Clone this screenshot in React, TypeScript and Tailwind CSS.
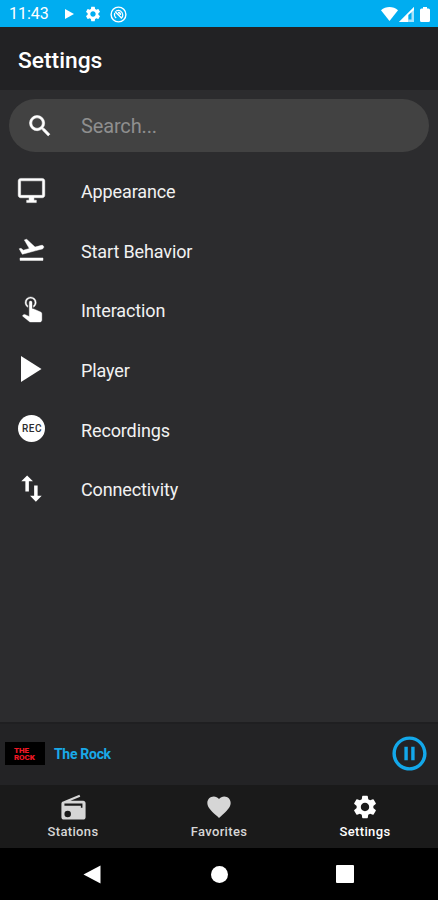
import { MdFavorite, MdPauseCircleOutline, MdSettings } from "react-icons/md"

const items = [
  {
    title: "Appearance",
    icon: (
      <svg width="29" height="29" viewBox="0 0 24 24" fill="currentColor" stroke="currentColor" strokeWidth=".4">
        <path d="M21 2H3c-1.1 0-2 .9-2 2v12c0 1.1.9 2 2 2h7v2H8v2h8v-2h-2v-2h7c1.1 0 2-.9 2-2V4c0-1.1-.9-2-2-2zm0 14H3V4h18v12z" />
      </svg>
    ),
  },
  {
    title: "Start Behavior",
    icon: (
      <svg width="29" height="29" viewBox="0 0 24 24" fill="currentColor" stroke="currentColor" strokeWidth=".4">
        <path d="M2.5 19h19v2h-19zM22.07 9.64c-.21-.8-1.04-1.28-1.84-1.06L14.92 10l-6.9-6.43-1.93.51 4.14 7.17-4.97 1.33-1.97-1.54-1.45.39 1.82 3.16.77 1.33 1.6-.43 5.31-1.42 4.35-1.16L21 11.49c.81-.23 1.28-1.05 1.07-1.85z" />
      </svg>
    ),
  },
  {
    title: "Interaction",
    icon: (
      <svg width="30" height="30" viewBox="0 0 24 24" fill="currentColor">
        <path
          transform="translate(-1.4 -3.3) scale(1.12)"
          stroke="currentColor"
          strokeWidth=".25"
          d="M10 9A1 1 0 0 1 11 8a1 1 0 0 1 1 1v4.47l1.21.13 4.94 2.19c.53.24.85.77.85 1.35v4.36c-.03.82-.68 1.47-1.5 1.5H11c-.38 0-.74-.15-1-.43L5.1 18.62l.74-.77c.19-.21.46-.32.74-.32h.22L10 19V9m1-4a4 4 0 0 1 4 4c0 1.5-.8 2.77-2 3.46v-1.22c.61-.55 1-1.35 1-2.24a3 3 0 0 0-6 0c0 .89.39 1.69 1 2.24v1.22C7.8 11.77 7 10.5 7 9a4 4 0 0 1 4-4z"
        />
      </svg>
    ),
  },
  {
    title: "Player",
    icon: (
      <svg width="21" height="26" viewBox="0 0 21 26" fill="currentColor">
        <path d="M0 0v26l20.5-13z" />
      </svg>
    ),
  },
  {
    title: "Recordings",
    icon: (
      <span className="flex size-[27px] shrink-0 items-center justify-center rounded-full bg-white pl-px text-[10px] font-medium tracking-[0.5px] text-[#2c2c2e]">
        REC
      </span>
    ),
  },
  {
    title: "Connectivity",
    icon: (
      <svg width="35" height="35" viewBox="0 0 24 24" fill="currentColor" className="shrink-0">
        <path d="M9 3L5 6.99h2.8V14h2.4V6.99H13L9 3zm7.2 14.01V10h-2.4v7.01H11L15 21l4-3.99z" />
      </svg>
    ),
  },
]

const tabs = [
  {
    title: "Stations",
    icon: (
      <svg width="29" height="29" viewBox="0 0 24 24" fill="currentColor">
        <path
          fillRule="evenodd"
          d="M20 6.5H9.5l8.1-3.4-.7-1.7L3.4 7C2.5 7.3 2 8 2 8.8V20c0 1.1.9 2 2 2h16c1.1 0 2-.9 2-2V8.500c0-1.100-.9-2-2-2zM7.200 20a2.700 2.700 0 1 1 0-5.400 2.700 2.700 0 0 1 0 5.400zM19.400 12.200h-1.300v-1.700H4.500V8.600h14.900z"
        />
      </svg>
    ),
    active: false,
  },
  { title: "Favorites", icon: <MdFavorite size={28} />, active: false },
  { title: "Settings", icon: <MdSettings size={28} />, active: true },
]

function StatusBar() {
  return (
    <div className="flex h-[27px] shrink-0 items-center bg-[#00adf0] pr-2 pl-[9px] pt-px text-white">
      <span className="w-14 text-[16px] leading-none">11:43</span>
      <svg width="9" height="10" viewBox="0 0 9 10" fill="currentColor">
        <path d="M0 0v10l9-5z" />
      </svg>
      <MdSettings size={18} className="ml-[10px]" />
      <svg className="ml-2" width="17" height="17" viewBox="0 0 17 17" fill="none" stroke="currentColor">
        <circle cx="8.5" cy="8.5" r="7.4" strokeWidth="1.4" />
        <path d="M6 5q4-2 6 1.500t-1 6M4.700 7q-1 3 1.500 5" strokeWidth="1.2" />
        <path d="M5 5.500l6.500 6.500M8 6.500q2.500 0 2.500 2.500" strokeWidth="1.400" />
      </svg>
      <div className="ml-auto flex items-center">
        <svg width="17" height="14" viewBox="0 0 17 14" fill="currentColor">
          <path d="M0 3.2C4.8-1 12.2-1 17 3.2L8.5 14z" />
        </svg>
        <svg className="ml-px" width="16" height="15" viewBox="0 0 16 15" fill="currentColor">
          <path d="M0 15L15 0v15z" opacity=".65" />
          <path d="M0 15L15 0v3L9 8v7z" />
          <path d="M9.500 8l3-2.500v7h-3z" fill="#00adf0" />
        </svg>
        <svg className="ml-[5px]" width="10" height="15" viewBox="0 0 10 15" fill="currentColor">
          <path d="M3 0h4v1.5h1.5Q10 1.5 10 3v10.5Q10 15 8.5 15h-7Q0 15 0 13.5V3q0-1.5 1.5-1.5H3z" />
        </svg>
      </div>
    </div>
  )
}

export default function App() {
  return (
    <div className="flex h-[900px] w-[438px] flex-col overflow-hidden bg-[#2c2c2e] font-['Roboto',sans-serif] text-white">
      <StatusBar />

      <header className="flex h-[63px] shrink-0 items-center bg-[#222224] pl-[18px] pt-[5px]">
        <h1 className="text-[22.8px] leading-[30px] font-medium">Settings</h1>
      </header>

      {/* Search */}
      <div className="mx-[9px] mt-[9px] flex h-[53px] shrink-0 items-center rounded-full bg-[#424242] pl-[17px]">
        <svg width="28" height="28" viewBox="0 0 24 24" fill="currentColor" stroke="currentColor" strokeWidth=".5">
          <path d="M15.5 14h-.79l-.28-.27A6.471 6.471 0 0 0 16 9.5 6.5 6.5 0 1 0 9.5 16c1.61 0 3.09-.59 4.23-1.57l.27.28v.79l5 4.99L20.49 19l-4.99-5zm-6 0C7.01 14 5 11.99 5 9.5S7.01 5 9.5 5 14 7.01 14 9.5 11.99 14 9.5 14z" />
        </svg>
        <span className="ml-[27px] text-[20px] tracking-[-0.15px] text-[#8f8f8f]">Search...</span>
      </div>

      {/* Settings list */}
      <ul className="grow pt-[9.5px]">
        {items.map((item) => (
          <li key={item.title} className="flex h-[59.6px] items-center">
            <div className="flex w-[63px] shrink-0 items-center justify-center pb-[2px]">{item.icon}</div>
            <span className="ml-[18px] pt-px text-[18px] tracking-[-0.13px] text-[#f2f2f2]">{item.title}</span>
          </li>
        ))}
      </ul>

      {/* Now playing */}
      <div className="flex h-[63px] shrink-0 items-center border-t-2 border-[#1f1f21] bg-[#232325] pr-[9px] pb-[2px] pl-[5px]">
        <div className="flex h-[23px] w-10 flex-col items-start justify-center bg-black pl-[9px] text-[8px] font-black tracking-[-0.1px] text-[#f01824]">
          <span className="block h-[7px] leading-[7px]">THE</span>
          <span className="block h-[7px] leading-[7px]">ROCK</span>
        </div>
        <span className="ml-[9px] pt-px text-[14px] font-bold tracking-[-0.3px] text-[#19a9e8]">The Rock</span>
        <MdPauseCircleOutline size={41} className="-mr-px ml-auto text-[#13a8ea]" />
      </div>

      {/* Tabs */}
      <nav className="grid h-[63px] shrink-0 grid-cols-3 bg-[#1a1a1a]">
        {tabs.map((tab) => (
          <div
            key={tab.title}
            className={`flex flex-col items-center pt-[7px] ${tab.active ? "text-white" : "text-[#d6d6d6]"}`}
          >
            <div className="flex h-[30px] items-center">{tab.icon}</div>
            <span className="text-[13px] leading-[19px] font-medium tracking-[0.35px]">{tab.title}</span>
          </div>
        ))}
      </nav>

      {/* System navigation */}
      <div className="flex h-[52px] shrink-0 items-center bg-black pl-[83px]">
        <svg width="18" height="19" viewBox="0 0 18 19" fill="currentColor">
          <path d="M17.5.5v18L.5 9.5z" />
        </svg>
        <div className="ml-[110px] size-[17px] rounded-full bg-white" />
        <div className="ml-[108px] size-[18px] rounded-[1px] bg-white" />
      </div>
    </div>
  )
}
